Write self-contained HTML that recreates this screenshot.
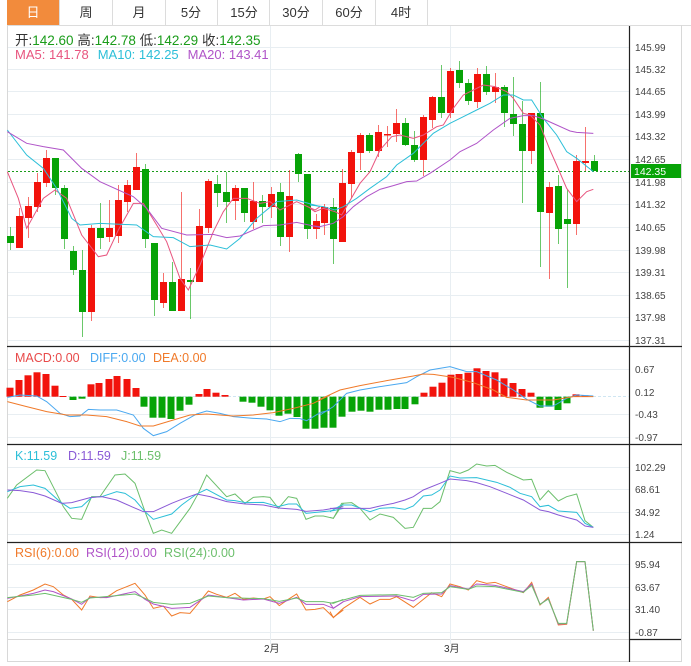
<!DOCTYPE html>
<html><head><meta charset="utf-8"><style>
html,body{margin:0;padding:0;background:#fff;width:691px;height:666px;overflow:hidden}
svg{display:block;font-family:"Liberation Sans","Noto Sans CJK SC",sans-serif}
.nss{vector-effect:non-scaling-stroke;fill:none;stroke-width:1}
</style></head><body>
<svg width="691" height="666" viewBox="0 0 691 666" xmlns="http://www.w3.org/2000/svg">
<rect x="7" y="0" width="52" height="25" fill="#f28b3c"/>
<g stroke="#dcdcdc" stroke-width="1">
<line x1="7" y1="25.5" x2="691" y2="25.5"/>
<line x1="59.5" y1="0" x2="59.5" y2="25"/><line x1="112.5" y1="0" x2="112.5" y2="25"/><line x1="165.5" y1="0" x2="165.5" y2="25"/><line x1="217.5" y1="0" x2="217.5" y2="25"/><line x1="269.5" y1="0" x2="269.5" y2="25"/><line x1="322.5" y1="0" x2="322.5" y2="25"/><line x1="375.5" y1="0" x2="375.5" y2="25"/><line x1="427.5" y1="0" x2="427.5" y2="25"/>
</g>
<g font-size="13" fill="#333" text-anchor="middle">
<text x="33" y="17" fill="#fff">日</text><text x="86" y="17">周</text><text x="139" y="17">月</text><text x="191" y="17">5分</text><text x="244" y="17">15分</text><text x="296" y="17">30分</text><text x="349" y="17">60分</text><text x="401" y="17">4时</text>
</g>
<g stroke="#d8d8d8" stroke-width="1" fill="none">
<line x1="7.5" y1="25" x2="7.5" y2="662"/><line x1="681.5" y1="25" x2="681.5" y2="662"/><line x1="7" y1="661.5" x2="682" y2="661.5"/>
<line x1="7" y1="639.5" x2="629" y2="639.5"/>
</g>
<g stroke="#e8eef2" stroke-width="1">
<line x1="8" y1="47.5" x2="629" y2="47.5"/><line x1="8" y1="69.5" x2="629" y2="69.5"/><line x1="8" y1="91.5" x2="629" y2="91.5"/><line x1="8" y1="114.5" x2="629" y2="114.5"/><line x1="8" y1="136.5" x2="629" y2="136.5"/><line x1="8" y1="159.5" x2="629" y2="159.5"/><line x1="8" y1="182.5" x2="629" y2="182.5"/><line x1="8" y1="204.5" x2="629" y2="204.5"/><line x1="8" y1="227.5" x2="629" y2="227.5"/><line x1="8" y1="250.5" x2="629" y2="250.5"/><line x1="8" y1="272.5" x2="629" y2="272.5"/><line x1="8" y1="295.5" x2="629" y2="295.5"/><line x1="8" y1="317.5" x2="629" y2="317.5"/><line x1="8" y1="340.5" x2="629" y2="340.5"/>
<line x1="8" y1="369.5" x2="629" y2="369.5"/><line x1="8" y1="414.5" x2="629" y2="414.5"/><line x1="8" y1="437.5" x2="629" y2="437.5"/>
<line x1="8" y1="467.5" x2="629" y2="467.5"/><line x1="8" y1="489.5" x2="629" y2="489.5"/><line x1="8" y1="512.5" x2="629" y2="512.5"/><line x1="8" y1="534.5" x2="629" y2="534.5"/>
<line x1="8" y1="564.5" x2="629" y2="564.5"/><line x1="8" y1="587.5" x2="629" y2="587.5"/><line x1="8" y1="609.5" x2="629" y2="609.5"/><line x1="8" y1="632.5" x2="629" y2="632.5"/>
<line x1="270.5" y1="26" x2="270.5" y2="644"/><line x1="450.5" y1="26" x2="450.5" y2="644"/>
</g>
<text x="15" y="45" font-size="13.5" fill="#333">开:<tspan fill="#1a9c1a">142.60</tspan>  高:<tspan fill="#1a9c1a">142.78</tspan>  低:<tspan fill="#1a9c1a">142.29</tspan>  收:<tspan fill="#1a9c1a">142.35</tspan></text>
<text x="15" y="59" font-size="13" fill="#e8557f">MA5: 141.78<tspan fill="#2cbfd8" dx="9">MA10: 142.25</tspan><tspan fill="#b054c8" dx="9">MA20: 143.41</tspan></text>
<g stroke="#222" stroke-width="1.2">
<line x1="7" y1="346.5" x2="682" y2="346.5"/><line x1="7" y1="444.5" x2="682" y2="444.5"/><line x1="7" y1="542.5" x2="682" y2="542.5"/>
<line x1="629.5" y1="26" x2="629.5" y2="662"/><line x1="629" y1="639.5" x2="681" y2="639.5"/>
</g>
<line x1="8" y1="171.5" x2="629" y2="171.5" stroke="#1a9c1a" stroke-dasharray="2,2"/>
<g font-size="10" fill="#444" stroke="none">
<text x="635" y="51">145.99</text><text x="635" y="73">145.32</text><text x="635" y="95">144.65</text><text x="635" y="118">143.99</text><text x="635" y="140">143.32</text><text x="635" y="163">142.65</text><text x="635" y="186">141.98</text><text x="635" y="208">141.32</text><text x="635" y="231">140.65</text><text x="635" y="254">139.98</text><text x="635" y="276">139.31</text><text x="635" y="299">138.65</text><text x="635" y="321">137.98</text><text x="635" y="344">137.31</text>
<text x="635" y="373">0.67</text><text x="635" y="396">0.12</text><text x="635" y="418">-0.43</text><text x="635" y="441">-0.97</text>
<text x="635" y="471">102.29</text><text x="635" y="493">68.61</text><text x="635" y="516">34.92</text><text x="635" y="538">1.24</text>
<text x="635" y="568">95.94</text><text x="635" y="591">63.67</text><text x="635" y="613">31.40</text><text x="635" y="636">-0.87</text>
<text x="264" y="652" fill="#333">2月</text><text x="444" y="652" fill="#333">3月</text>
</g>
<rect x="631" y="164" width="50" height="14" fill="#07a307"/>
<text x="634" y="175" font-size="10.5" fill="#fff">142.35</text>
<g fill="#07a307" stroke="#07a307">
<path d="M10.5 227V250M55.5 158V195M64.5 185V249M73.5 246V275M82.5 250V337M100.5 203V249M145.5 164V248M154.5 243V316M172.5 262V311M190.5 268V319M217.5 175V207M226.5 172V223M244.5 188V222M262.5 195V223M280.5 183V246M298.5 153V182M307.5 174V239M333.5 198V264M369.5 133V153M405.5 118V146M414.5 131V162M441.5 65V118M459.5 61V88M468.5 79V105M486.5 66V95M504.5 85V127M513.5 77V136M522.5 101V203M540.5 82V267M558.5 175V244M567.5 190V288M594.5 155V171" stroke-width="1" opacity=".6" fill="none"/>
<g stroke="none">
<rect x="7" y="236" width="7" height="7"/><rect x="52" y="158" width="7" height="30"/><rect x="61" y="188" width="7" height="51"/><rect x="70" y="251" width="7" height="19"/><rect x="79" y="270" width="7" height="42"/><rect x="97" y="228" width="7" height="10"/><rect x="142" y="169" width="7" height="70"/><rect x="151" y="243" width="7" height="57"/><rect x="169" y="282" width="7" height="29"/><rect x="187" y="280" width="7" height="2"/><rect x="214" y="184" width="7" height="9"/><rect x="223" y="192" width="7" height="10"/><rect x="241" y="188" width="7" height="25"/><rect x="259" y="201" width="7" height="6"/><rect x="277" y="192" width="7" height="45"/><rect x="295" y="154" width="7" height="20"/><rect x="304" y="174" width="7" height="55"/><rect x="330" y="207" width="7" height="32"/><rect x="366" y="135" width="7" height="16"/><rect x="402" y="123" width="7" height="22"/><rect x="411" y="145" width="7" height="15"/><rect x="438" y="97" width="7" height="16"/><rect x="456" y="70" width="7" height="13"/><rect x="465" y="83" width="7" height="18"/><rect x="483" y="74" width="7" height="18"/><rect x="501" y="87" width="7" height="26"/><rect x="510" y="114" width="7" height="10"/><rect x="519" y="124" width="7" height="27"/><rect x="537" y="113" width="7" height="99"/><rect x="555" y="186" width="7" height="43"/><rect x="564" y="219" width="7" height="5"/><rect x="591" y="161" width="7" height="10"/>
</g></g>
<g fill="#f2130c">
<path d="M19.5 208V248M28.5 197V238M37.5 173V212M46.5 150V187M91.5 225V321M109.5 200V242M118.5 185V243M127.5 180V212M136.5 153V190M163.5 273V308M181.5 192V311M199.5 209V282M208.5 179V233M235.5 185V220M253.5 182V229M271.5 187V218M289.5 170V252M316.5 214V239M324.5 204V235M342.5 169V242M351.5 150V198M360.5 133V170M378.5 125V157M387.5 126V147M396.5 109V142M423.5 115V176M432.5 96V128M450.5 68V118M477.5 68V108M495.5 73V103M531.5 113V164M549.5 182V279M576.5 155V235M585.5 127V171" stroke="#f2130c" stroke-width="1" opacity=".6" fill="none"/>
<rect x="16" y="216" width="7" height="32"/><rect x="25" y="206" width="7" height="12"/><rect x="34" y="182" width="7" height="25"/><rect x="43" y="158" width="7" height="25"/><rect x="88" y="228" width="7" height="84"/><rect x="106" y="228" width="7" height="9"/><rect x="115" y="200" width="7" height="36"/><rect x="124" y="185" width="7" height="17"/><rect x="133" y="167" width="7" height="23"/><rect x="160" y="282" width="7" height="21"/><rect x="178" y="279" width="7" height="32"/><rect x="196" y="226" width="7" height="56"/><rect x="205" y="181" width="7" height="47"/><rect x="232" y="188" width="7" height="13"/><rect x="250" y="201" width="7" height="21"/><rect x="268" y="194" width="7" height="13"/><rect x="286" y="196" width="7" height="41"/><rect x="313" y="221" width="7" height="8"/><rect x="321" y="207" width="7" height="16"/><rect x="339" y="183" width="7" height="59"/><rect x="348" y="152" width="7" height="32"/><rect x="357" y="135" width="7" height="18"/><rect x="375" y="132" width="7" height="19"/><rect x="384" y="134" width="7" height="1.5"/><rect x="393" y="123" width="7" height="11"/><rect x="420" y="117" width="7" height="43"/><rect x="429" y="97" width="7" height="23"/><rect x="447" y="71" width="7" height="42"/><rect x="474" y="74" width="7" height="28"/><rect x="492" y="87" width="7" height="5"/><rect x="528" y="113" width="7" height="38"/><rect x="546" y="187" width="7" height="26"/><rect x="573" y="161" width="7" height="63"/><rect x="582" y="161" width="7" height="2"/>
</g>
<g transform="translate(0,55) scale(0.33333)">
<polyline class="nss" stroke="#e8557f" points="22,350 55,430 80,520 130,430 165,405 200,430 245,540 295,605 320,600 355,525 400,445 430,445 470,510 500,560 540,670 565,705 600,630 640,530 670,470 700,430 740,430 780,445 810,440 840,465 890,440 945,465 960,455"/>
<polyline class="nss" stroke="#2cbfd8" points="22,225 80,300 130,340 170,400 215,490 240,510 300,505 410,510 460,545 520,548 570,575 630,570 680,582 720,550 770,490 830,440 890,435 960,455"/>
<polyline class="nss" stroke="#b054c8" points="22,230 80,265 130,275 190,285 245,340 300,380 400,425 440,460 485,520 560,540 640,538 680,548 720,543 790,512 840,510 890,502 960,517"/>
</g>
<g transform="translate(310,55) scale(0.33333)">
<polyline class="nss" stroke="#e8557f" points="0,460 15,470 40,460 75,470 95,480 150,385 180,350 210,285 245,245 270,240 310,250 340,240 380,215 400,210 430,160 460,120 480,110 520,90 555,95 590,110 610,130 640,175 660,180 690,210 720,285 740,330 770,400 800,440 830,410 850,403"/>
<polyline class="nss" stroke="#2cbfd8" points="0,450 40,455 75,465 100,455 140,430 180,400 230,365 260,330 310,295 370,235 420,205 460,185 500,165 540,145 580,120 610,120 640,135 665,135 700,190 740,240 770,290 800,310 850,350"/>
<polyline class="nss" stroke="#b054c8" points="0,512 30,515 70,505 100,485 130,455 170,425 210,403 250,392 290,380 320,378 360,355 420,315 450,290 500,265 550,225 600,190 640,182 670,182 700,192 740,210 780,228 800,232 850,235"/>
</g>
<g font-size="12.5"><text x="15" y="362" fill="#e84a4a">MACD:0.00</text><text x="90" y="362" fill="#4aa8f0">DIFF:0.00</text><text x="153" y="362" fill="#f07a2a">DEA:0.00</text></g>
<line x1="8" y1="396.5" x2="629" y2="396.5" stroke="#cfe6f2" stroke-dasharray="3,2"/>
<g fill="#f2130c">
<rect x="6.5" y="387.7" width="7" height="9"/><rect x="15.5" y="380" width="7" height="16.7"/><rect x="24.5" y="375.3" width="7" height="21.4"/><rect x="33.5" y="372.3" width="7" height="24.4"/><rect x="42.5" y="374" width="7" height="22.7"/><rect x="51.5" y="385.7" width="7" height="11"/><rect x="59.5" y="396" width="7" height="1"/>
<rect x="87.5" y="384.3" width="7" height="12.4"/><rect x="95.5" y="383" width="7" height="13.7"/><rect x="105.5" y="379" width="7" height="17.7"/><rect x="113.5" y="376" width="7" height="20.7"/><rect x="123.5" y="379" width="7" height="17.7"/><rect x="132.5" y="388" width="7" height="8.7"/>
<rect x="195.5" y="394" width="7" height="2.7"/><rect x="203.5" y="389" width="7" height="7.7"/><rect x="212.5" y="392.7" width="7" height="4"/><rect x="221.5" y="395" width="7" height="1.7"/>
<rect x="420.5" y="392.7" width="7" height="4"/><rect x="429.5" y="386.7" width="7" height="10"/><rect x="438.5" y="382.7" width="7" height="14"/><rect x="447.5" y="374.7" width="7" height="22"/><rect x="455.5" y="374" width="7" height="22.7"/><rect x="464.5" y="372.7" width="7" height="24"/><rect x="473.5" y="368.3" width="7" height="28.4"/><rect x="482.5" y="371" width="7" height="25.7"/><rect x="491.5" y="372.3" width="7" height="24.4"/><rect x="500.5" y="378.3" width="7" height="18.4"/><rect x="509.5" y="383" width="7" height="13.7"/><rect x="518.5" y="389" width="7" height="7.7"/><rect x="527.5" y="392.7" width="7" height="4"/>
<rect x="572.5" y="394.3" width="7" height="2.4"/><rect x="581.5" y="395.3" width="7" height="1.4"/>
</g>
<g fill="#07a307">
<rect x="69.5" y="396.7" width="7" height="3.3"/><rect x="78.5" y="396.7" width="7" height="2"/>
<rect x="140.5" y="396.7" width="7" height="10"/><rect x="149.5" y="396.7" width="7" height="21"/><rect x="158.5" y="396.7" width="7" height="21"/><rect x="167.5" y="396.7" width="7" height="22.3"/><rect x="176.5" y="396.7" width="7" height="14"/><rect x="185.5" y="396.7" width="7" height="8"/>
<rect x="239.5" y="396.7" width="7" height="5"/><rect x="248.5" y="396.7" width="7" height="6"/><rect x="257.5" y="396.7" width="7" height="10"/><rect x="266.5" y="396.7" width="7" height="13.6"/><rect x="275.5" y="396.7" width="7" height="19"/><rect x="284.5" y="396.7" width="7" height="17"/><rect x="293.5" y="396.7" width="7" height="20.3"/><rect x="302.5" y="396.7" width="7" height="32"/><rect x="311.5" y="396.7" width="7" height="32"/><rect x="320.5" y="396.7" width="7" height="31"/><rect x="329.5" y="396.7" width="7" height="31"/><rect x="338.5" y="396.7" width="7" height="20"/><rect x="348.5" y="396.7" width="7" height="15"/><rect x="357.5" y="396.7" width="7" height="14"/><rect x="366.5" y="396.7" width="7" height="15"/><rect x="375.5" y="396.7" width="7" height="13"/><rect x="384.5" y="396.7" width="7" height="13"/><rect x="393.5" y="396.7" width="7" height="12.3"/><rect x="401.5" y="396.7" width="7" height="12.3"/><rect x="411.5" y="396.7" width="7" height="7.6"/>
<rect x="536.5" y="396.7" width="7" height="11"/><rect x="545.5" y="396.7" width="7" height="10"/><rect x="554.5" y="396.7" width="7" height="13.3"/><rect x="563.5" y="396.7" width="7" height="6.6"/>
</g>
<g transform="translate(0,340) scale(0.33333)">
<polyline class="nss" stroke="#4aa8f0" points="22,172 60,165 110,168 140,185 180,220 210,230 240,228 265,208 300,210 350,210 400,225 430,265 460,287 500,275 540,250 590,222 620,213 660,220 700,230 760,235 800,237 840,245 870,235 900,236 920,242 960,218 990,210"/>
<polyline class="nss" stroke="#f07a2a" points="22,185 80,200 140,215 200,225 260,225 320,230 380,245 420,258 460,258 520,240 570,225 620,222 700,228 760,225 820,218 880,205 940,190 990,165"/>
</g>
<g transform="translate(320,340) scale(0.33333)">
<polyline class="nss" stroke="#4aa8f0" points="0,225 40,200 80,160 120,150 180,140 260,128 290,110 330,90 390,80 440,95 470,95 530,120 580,150 620,178 660,198 700,198 740,175 770,165 820,168"/>
<polyline class="nss" stroke="#f07a2a" points="0,178 60,150 120,137 200,122 280,108 310,102 340,103 400,112 460,128 520,150 560,172 620,180 700,180 760,170 820,170"/>
</g>
<g font-size="12.5"><text x="15" y="460" fill="#2cbfd8">K:11.59</text><text x="68" y="460" fill="#8a5ad6">D:11.59</text><text x="121" y="460" fill="#6cbf6c">J:11.59</text></g>
<g transform="translate(0,440) scale(0.33333)">
<polyline class="nss" stroke="#6cbf6c" points="22,175 50,135 110,90 135,92 190,200 215,235 245,238 275,170 300,170 345,105 375,102 405,130 435,215 460,280 485,270 515,280 570,205 595,160 620,105 680,170 705,162 735,190 760,172 790,170 810,172 835,205 865,170 890,175 918,238 945,228 970,228 1000,235 1030,190"/>
<polyline class="nss" stroke="#2cbfd8" points="22,155 60,140 100,135 135,145 180,185 210,205 245,200 275,172 305,170 350,155 375,160 405,180 435,215 460,238 515,222 545,195 590,162 620,148 680,180 705,182 735,188 790,187 835,200 865,192 890,192 918,220 970,215 1000,212 1030,205"/>
<polyline class="nss" stroke="#8a5ad6" points="22,150 60,152 100,158 135,168 185,190 215,188 270,173 305,170 350,180 395,200 430,215 460,215 515,190 545,178 590,162 630,170 680,185 735,192 790,195 835,204 890,208 918,214 970,210 1030,200"/>
<polyline class="nss" stroke="#f07a2a" points="22,485 60,465 100,450 135,432 160,440 190,465 215,478 245,510 270,468 300,473 320,472 350,452 380,440 405,430 435,465 460,505 490,498 515,528 540,518 570,520 595,490 625,453 650,463 680,472 705,460 730,478 760,474 790,477 810,470 838,497 865,478 890,462 918,510 945,508 970,503 1000,532 1030,510"/>
<polyline class="nss" stroke="#b054c8" points="22,475 60,468 100,460 135,450 160,455 215,477 245,493 270,472 320,473 380,460 405,455 435,478 460,492 515,505 570,502 595,485 625,465 680,473 730,480 790,477 838,490 890,472 918,493 970,493 1000,505 1030,485"/>
<polyline class="nss" stroke="#6cbf6c" points="22,473 100,465 135,460 215,478 245,487 270,474 405,462 435,475 460,487 515,493 570,490 625,468 680,473 790,476 838,484 890,474 918,485 970,485 1000,490 1030,478"/>
</g>
<g transform="translate(330,440) scale(0.33333)">
<polyline class="nss" stroke="#6cbf6c" points="0,232 10,235 35,190 65,188 90,205 120,240 150,222 190,232 225,265 250,262 280,205 305,205 330,185 360,92 390,100 415,90 440,72 470,78 495,76 530,97 580,120 605,118 630,180 655,152 685,183 710,170 740,162 765,242 790,262"/>
<polyline class="nss" stroke="#2cbfd8" points="0,215 35,195 65,195 120,215 150,205 190,203 225,208 250,198 280,168 305,165 330,150 360,108 390,114 440,113 500,127 540,142 570,160 605,170 630,200 655,196 685,213 740,217 765,250 790,262"/>
<polyline class="nss" stroke="#8a5ad6" points="0,205 60,205 120,205 150,198 190,190 225,180 250,170 280,150 330,130 360,117 410,122 440,128 480,140 530,160 580,180 630,210 655,215 685,225 710,232 740,240 765,258 790,262"/>
<polyline class="nss" stroke="#f07a2a" points="0,515 10,533 40,505 90,472 120,492 150,478 180,478 200,470 250,502 280,478 305,458 335,470 360,432 390,440 415,450 440,422 470,430 495,427 530,440 580,458 605,427 630,495 655,472 685,555 710,553 740,365 765,365 790,572"/>
<polyline class="nss" stroke="#b054c8" points="0,490 10,505 40,485 90,470 200,468 250,483 280,463 335,462 360,437 415,447 440,432 495,436 580,455 605,432 630,493 655,476 685,552 710,551 740,365 765,365 790,572"/>
<polyline class="nss" stroke="#6cbf6c" points="0,490 40,480 90,466 200,464 250,472 280,460 335,458 360,440 415,448 440,438 495,440 580,457 605,436 630,493 655,477 685,550 710,550 740,365 765,365 790,572"/>
</g>
<g font-size="12.5"><text x="15" y="557" fill="#f07a2a">RSI(6):0.00</text><text x="86" y="557" fill="#b054c8">RSI(12):0.00</text><text x="164" y="557" fill="#6cbf6c">RSI(24):0.00</text></g>
</svg>
</body></html>
